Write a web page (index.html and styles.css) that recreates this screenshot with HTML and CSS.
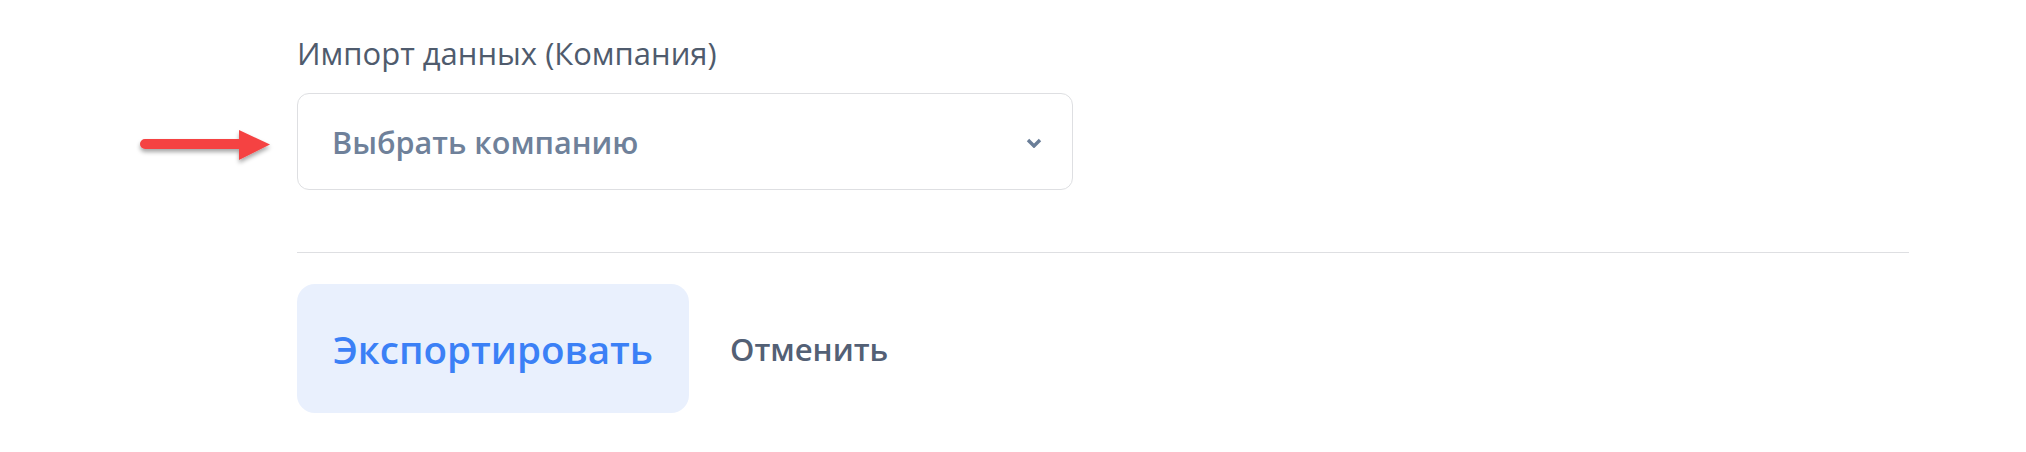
FILE: index.html
```html
<!DOCTYPE html>
<html lang="ru">
<head>
<meta charset="utf-8">
<title>Импорт данных</title>
<link rel="stylesheet" href="styles.css">
</head>
<body>
<div class="page">
  <div class="field">
    <label class="field-label">Импорт данных (Компания)</label>
    <div class="select-wrap">
      <svg class="annotation-arrow" width="140" height="50" viewBox="0 0 140 50" aria-hidden="true">
        <defs>
          <filter id="sh" x="-20%" y="-50%" width="140%" height="200%">
            <feDropShadow dx="0" dy="3" stdDeviation="2.2" flood-color="#000" flood-opacity="0.35"/>
          </filter>
        </defs>
        <g filter="url(#sh)" fill="#f54343">
          <path d="M9 13 H104 V23 H9 A5 5 0 0 1 9 13 Z"/>
          <path d="M103 4 L134 18.5 L103 34 Z"/>
        </g>
      </svg>
      <div class="select">
        <span class="select-placeholder">Выбрать компанию</span>
        <svg class="chevron" width="16" height="10" viewBox="0 0 16 10" aria-hidden="true">
          <path d="M2 2 L8 8 L14 2" fill="none" stroke="#6a7e98" stroke-width="3.4" stroke-linecap="butt" stroke-linejoin="miter"/>
        </svg>
      </div>
    </div>
  </div>
  <hr class="divider">
  <div class="actions">
    <button class="btn btn-primary" type="button">Экспортировать</button>
    <button class="btn btn-link" type="button">Отменить</button>
  </div>
</div>
</body>
</html>
```

FILE: styles.css
```css
html, body {
  margin: 0;
  padding: 0;
  background: #ffffff;
}

body {
  font-family: "Open Sans", "Noto Sans", sans-serif;
  color: #4a5568;
}

.page {
  padding: 33px 117px 0 297px;
}

.field {
  display: flex;
  flex-direction: column;
  gap: 20px;
}

.field-label {
  font-size: 31px;
  line-height: 40px;
  font-weight: 400;
  color: #4f5b6d;
}

.select-wrap {
  position: relative;
  width: 776px;
}

.annotation-arrow {
  position: absolute;
  left: -161px;
  top: 33px;
}

.select {
  box-sizing: border-box;
  height: 97px;
  border: 1px solid #dedfe2;
  border-radius: 12px;
  background: #ffffff;
  display: flex;
  align-items: center;
  justify-content: space-between;
  padding: 0 30px 0 34px;
}

.select-placeholder {
  font-size: 30.6px;
  font-weight: 600;
  color: #6f819a;
  line-height: 40px;
}

.chevron {
  display: block;
  margin-top: 2px;
}

.divider {
  border: 0;
  border-top: 1px solid #dedfe2;
  margin: 62px 0 31px 0;
  height: 0;
}

.actions {
  display: flex;
  align-items: center;
  gap: 41px;
}

.btn {
  font-family: "Open Sans", "Noto Sans", sans-serif;
  border: 0;
  background: none;
  cursor: pointer;
  padding: 0;
  font-weight: 600;
}

.btn-primary {
  width: 392px;
  height: 129px;
  border-radius: 18px;
  background: #e9f0fd;
  color: #3b80f6;
  font-size: 38.6px;
  line-height: 50px;
}

.btn-link {
  color: #536075;
  font-size: 31px;
  line-height: 40px;
}
```
